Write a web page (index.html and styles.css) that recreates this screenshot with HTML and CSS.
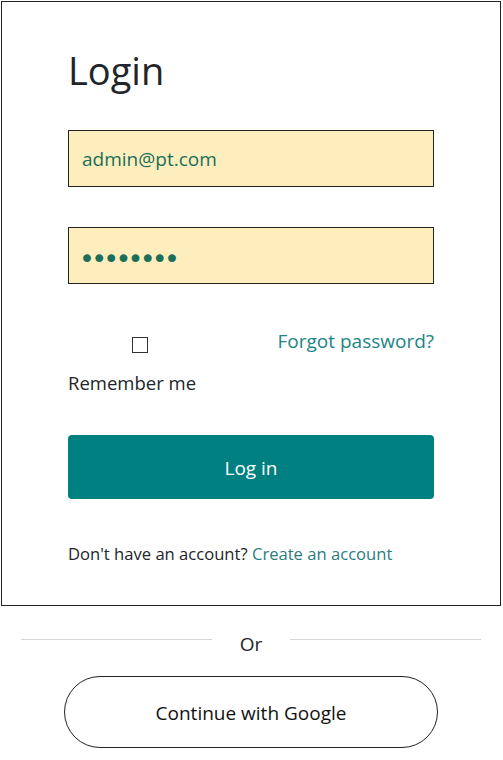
FILE: index.html
```html
<!DOCTYPE html>
<html lang="en">
<head>
<meta charset="utf-8">
<title>Login</title>
<link rel="stylesheet" href="styles.css">
</head>
<body>
<main class="page">
  <section class="card">
    <h1 class="title">Login</h1>
    <form class="form">
      <div class="field"><input class="input" type="email" value="admin@pt.com"></div>
      <div class="field"><input class="input input-pass" type="password" value="password"></div>
      <div class="options">
        <div class="remember">
          <input class="check" type="checkbox" id="remember">
          <label class="remember-label" for="remember">Remember me</label>
        </div>
        <a class="link forgot" href="#">Forgot password?</a>
      </div>
      <button class="btn-login" type="button">Log in</button>
      <p class="signup">Don't have an account? <a class="link" href="#">Create an account</a></p>
    </form>
  </section>
  <div class="divider"><span class="line"></span><span class="or">Or</span><span class="line"></span></div>
  <div class="google-wrap"><button class="btn-google" type="button">Continue with Google</button></div>
</main>
</body>
</html>
```
FILE: styles.css
```css
* { box-sizing: border-box; }
html, body { margin: 0; padding: 0; background: #fff; }
body {
  font-family: "Open Sans", "Noto Sans", sans-serif;
  color: #212529;
  font-size: 18px;
}
.page { width: 503px; padding-top: 1px; }
.card {
  margin-left: 1px;
  width: 500px;
  border: 1px solid #222;
  padding: 44px 66px 39px 66px;
}
.title {
  margin: 0;
  font-size: 38px;
  font-weight: 400;
  line-height: 48px;
  color: #212529;
}
.form { margin-top: 36px; }
.field { margin-bottom: 40px; }
.input {
  display: block;
  width: 100%;
  height: 57px;
  border: 1px solid #222;
  background: #ffeebd;
  padding: 0 13px;
  font-family: inherit;
  font-size: 19px;
  color: #1a6e5a;
  outline: none;
}
.input-pass {
  font-family: "DejaVu Sans", sans-serif;
  font-size: 27px;
  letter-spacing: -3.8px;
  padding: 6px 0 0 10px;
}
.options {
  display: flex;
  justify-content: space-between;
  align-items: flex-start;
  margin-top: 12px;
}
.remember { display: flex; flex-direction: column; align-items: flex-start; }
.check {
  appearance: none;
  -webkit-appearance: none;
  width: 16px;
  height: 16px;
  margin: 13px 0 0 64px;
  border: 1.5px solid #333;
  background: #fff;
}
.remember-label { font-size: 18.5px; margin-top: 18px; line-height: 24px; }
.forgot { font-size: 19px; line-height: 26px; margin-top: 4px; }
.link { color: #1c8585; text-decoration: none; }
.btn-login {
  display: block;
  width: 100%;
  height: 64px;
  margin-top: 40px;
  padding-top: 3px;
  border: 0;
  border-radius: 4px;
  background: #008080;
  color: #fff;
  font-family: inherit;
  font-size: 19px;
}
.signup { margin: 43px 0 0; font-size: 16.6px; line-height: 24px; }
.signup .link { color: #2b7d7d; }
.divider {
  display: flex;
  align-items: flex-start;
  margin: 25px 22px 0 21px;
  gap: 24px;
}
.line { flex: 1; height: 1px; background: #d4d4d4; margin-top: 8px; }
.or { font-size: 19px; line-height: 26px; padding: 0 4px; }
.google-wrap { display: flex; justify-content: center; margin-top: 19px; padding-right: 1px; }
.btn-google {
  width: 374px;
  height: 72px;
  padding-top: 3px;
  border: 1px solid #222;
  border-radius: 36px;
  background: #fff;
  color: #111;
  font-family: inherit;
  font-size: 19px;
}
```
